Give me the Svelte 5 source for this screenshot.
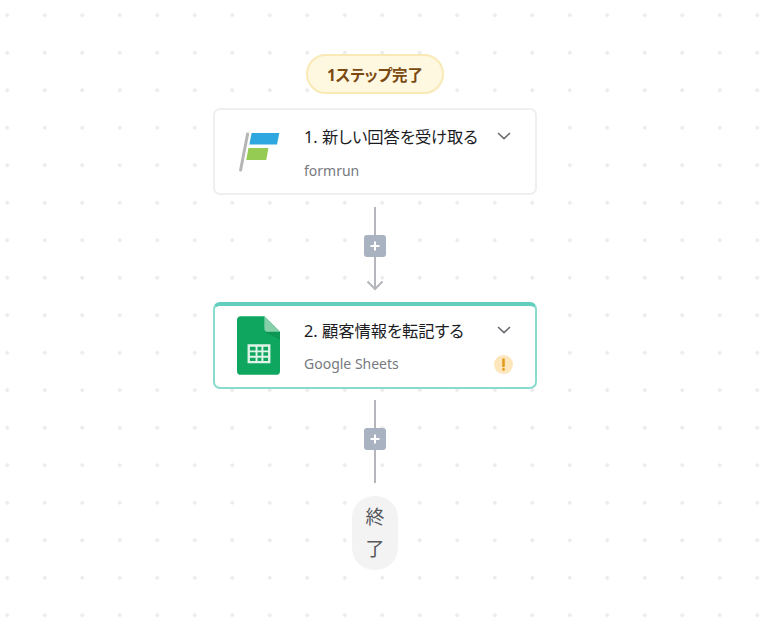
<script>
    const steps = [
        { id: 1, title: "1. 新しい回答を受け取る", app: "formrun", kind: "formrun" },
        { id: 2, title: "2. 顧客情報を転記する", app: "Google Sheets", kind: "sheets", active: true, warn: true },
    ];
</script>

{#snippet connector(arrow)}
    <div class="connector" class:arrow>
        <span class="line"></span>
        <button class="add" aria-label="add step">
            <svg width="12" height="12" viewBox="0 0 12 12">
                <path d="M6 1.5v9M1.5 6h9" stroke="#fff" stroke-width="2" />
            </svg>
        </button>
        {#if arrow}
            <svg class="head" width="18" height="11" viewBox="0 0 18 11">
                <path d="M1.5 1.5L9 9l7.5-7.5" fill="none" stroke="#b4b6bb" stroke-width="2" />
            </svg>
        {/if}
    </div>
{/snippet}

<main class="canvas">
    <div class="badge">1ステップ完了</div>

    {#each steps as step, index (step.id)}
        <section class="card" class:active={step.active}>
            <div class="logo">
                {#if step.kind === "formrun"}
                    <svg width="42" height="42" viewBox="0 0 42 42">
                        <path d="M9.6 3L2.6 39" stroke="#b5b5b8" stroke-width="3" stroke-linecap="round" />
                        <path d="M13.6 2H41.3L39 13.6H11.4z" fill="#2ea6e0" />
                        <path d="M10.4 17H30.4L28.3 29H8.3z" fill="#95cb52" />
                    </svg>
                {:else}
                    <svg width="43" height="59" viewBox="0 0 44 60">
                        <path d="M4 0h24l16 16v40a4 4 0 0 1-4 4H4a4 4 0 0 1-4-4V4a4 4 0 0 1 4-4z" fill="#0fa760" />
                        <path d="M28 16l16 8v-8z" fill="#0b9655" />
                        <path d="M28 0l16 16H32a4 4 0 0 1-4-4z" fill="#87cfa9" />
                        <path d="M12 30h21v17H12z" fill="none" stroke="#e0f3e8" stroke-width="2.4" />
                        <path d="M12 36h21M12 41.500h21M20 30v17M26 30v17" stroke="#e0f3e8" stroke-width="2" />
                    </svg>
                {/if}
            </div>
            <div class="body">
                <div class="title-row">
                    <h2>{step.title}</h2>
                    <svg class="chevron" width="14" height="8" viewBox="0 0 14 8">
                        <path d="M1 1l6 5.600L13 1" fill="none" stroke="#666a70" stroke-width="1.5" />
                    </svg>
                </div>
                <div class="sub-row">
                    <span class="app">{step.app}</span>
                    {#if step.warn}
                        <span class="warn">
                            <svg width="19" height="19" viewBox="0 0 19 19">
                                <path d="M9.500 4.500v6.500" stroke="#e39b1b" stroke-width="2.600" stroke-linecap="round" />
                                <circle cx="9.500" cy="14.300" r="1.400" fill="#e39b1b" />
                            </svg>
                        </span>
                    {/if}
                </div>
            </div>
        </section>
        {@render connector(index === 0)}
    {/each}

    <div class="end">終了</div>
</main>

<style>
    :global(body) {
        background: #fff;
    }

    .canvas {
        box-sizing: border-box;
        width: 784px;
        height: 631px;
        padding: 54px 34px 0 0;
        display: flex;
        flex-direction: column;
        align-items: center;
        font-family: "Noto Sans", "Noto Sans CJK JP", sans-serif;
        background-image: radial-gradient(circle, #ececec 1.6px, transparent 2.1px);
        background-size: 37.5px 37.5px;
        background-position: -11.5px -3.5px;
    }

    .badge {
        box-sizing: border-box;
        width: 138px;
        height: 40px;
        display: flex;
        align-items: center;
        justify-content: center;
        background: #fff8e1;
        border: 2px solid #f9e9b4;
        border-radius: 20px;
        color: #7a4a12;
        font-size: 15.5px;
        font-weight: 700;
        font-feature-settings: "palt";
    }

    .card {
        box-sizing: border-box;
        width: 324px;
        height: 87px;
        margin-top: 14px;
        display: flex;
        background: #fff;
        border: 2px solid #eeeff0;
        border-radius: 7px;
    }

    .card.active {
        margin-top: 0;
        border-color: #88dbce;
        border-top-color: #60cfbd;
        border-top-width: 4px;
    }

    .logo {
        width: 89px;
        flex: none;
        display: flex;
        align-items: center;
        padding-left: 23px;
        box-sizing: border-box;
    }

    .active .logo {
        padding-left: 22px;
        padding-bottom: 2px;
    }

    .body {
        flex: 1;
        min-width: 0;
        padding: 14px 22px 0 0;
        display: flex;
        flex-direction: column;
        gap: 13px;
    }

    .active .body {
        padding-top: 12px;
        gap: 12px;
    }

    .title-row {
        height: 24px;
        display: flex;
        align-items: center;
        justify-content: space-between;
    }

    h2 {
        margin: 0;
        font-size: 16.3px;
        font-weight: 400;
        font-feature-settings: "palt";
        color: #1b1c1f;
        white-space: nowrap;
    }

    .chevron {
        margin-right: 2px;
    }

    .sub-row {
        height: 20px;
        display: flex;
        align-items: center;
        justify-content: space-between;
    }

    .app {
        font-size: 14px;
        color: #77797e;
        line-height: 20px;
    }

    .warn {
        width: 19px;
        height: 19px;
        border-radius: 50%;
        background: #fde6bb;
        display: flex;
        margin-top: 1px;
    }

    .connector {
        position: relative;
        width: 22px;
        height: 83px;
        margin: 12px 0;
        display: flex;
        justify-content: center;
    }

    .connector:not(.arrow) {
        margin-top: 11px;
    }

    .connector .line {
        width: 2px;
        background: #b4b6bb;
    }

    .add {
        position: absolute;
        top: 28px;
        left: 0;
        width: 22px;
        height: 22px;
        padding: 0;
        border: none;
        border-radius: 3px;
        background: #a9b2c0;
        display: flex;
        align-items: center;
        justify-content: center;
    }

    .head {
        position: absolute;
        left: 2px;
        bottom: -1px;
    }

    .end {
        box-sizing: border-box;
        width: 46px;
        height: 74px;
        margin-top: 1px;
        padding: 0 13.5px;
        display: flex;
        align-items: center;
        background: #f3f3f4;
        border-radius: 22px;
        color: #55575b;
        font-size: 19px;
        line-height: 32px;
        text-align: center;
    }
</style>
